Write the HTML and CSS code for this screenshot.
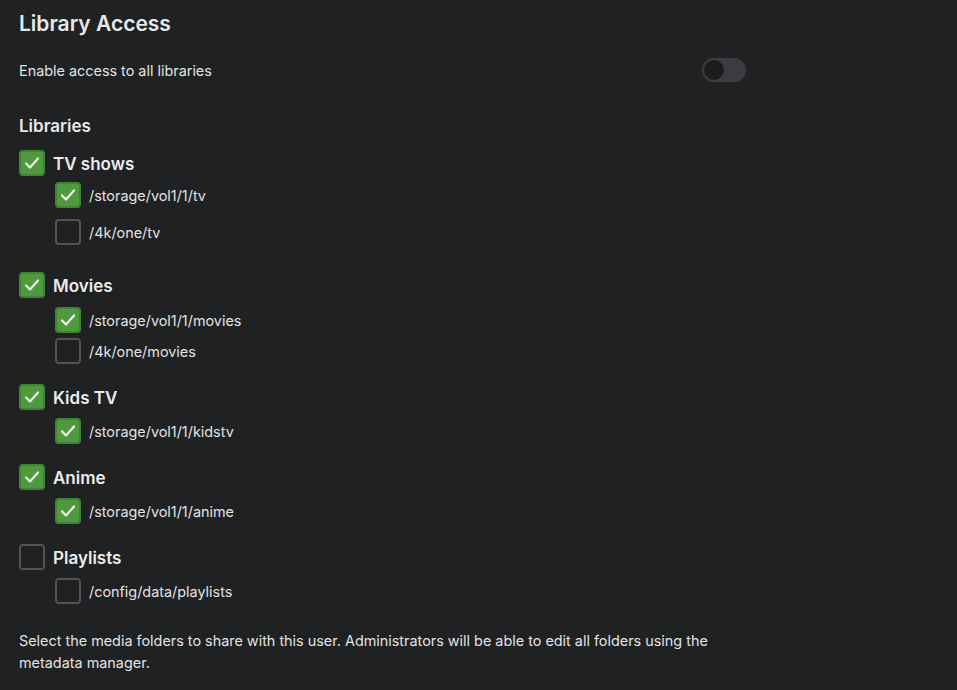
FILE: index.html
```html
<!DOCTYPE html>
<html lang="en">
<head>
<meta charset="utf-8">
<title>Library Access</title>
<link rel="stylesheet" href="styles.css">
</head>
<body>
<div class="page">
  <h1 class="title">Library Access</h1>
  <div class="toggle-row">
    <span class="label">Enable access to all libraries</span>
    <span class="toggle"><span class="knob"></span></span>
  </div>
  <h2 class="section">Libraries</h2>

  <div class="groups">
    <div class="group group-tv">
      <div class="row head"><span class="cb on"><svg viewBox="0 0 26 26"><polyline points="7,13.5 11,17.5 19,8.5"/></svg></span><span>TV shows</span></div>
      <div class="subs">
        <div class="row sub"><span class="cb on"><svg viewBox="0 0 26 26"><polyline points="7,13.5 11,17.5 19,8.5"/></svg></span><span>/storage/vol1/1/tv</span></div>
        <div class="row sub"><span class="cb"></span><span>/4k/one/tv</span></div>
      </div>
    </div>

    <div class="group group-movies">
      <div class="row head"><span class="cb on"><svg viewBox="0 0 26 26"><polyline points="7,13.5 11,17.5 19,8.5"/></svg></span><span>Movies</span></div>
      <div class="subs">
        <div class="row sub"><span class="cb on"><svg viewBox="0 0 26 26"><polyline points="7,13.5 11,17.5 19,8.5"/></svg></span><span>/storage/vol1/1/movies</span></div>
        <div class="row sub"><span class="cb"></span><span>/4k/one/movies</span></div>
      </div>
    </div>

    <div class="group">
      <div class="row head"><span class="cb on"><svg viewBox="0 0 26 26"><polyline points="7,13.5 11,17.5 19,8.5"/></svg></span><span>Kids TV</span></div>
      <div class="subs">
        <div class="row sub"><span class="cb on"><svg viewBox="0 0 26 26"><polyline points="7,13.5 11,17.5 19,8.5"/></svg></span><span>/storage/vol1/1/kidstv</span></div>
      </div>
    </div>

    <div class="group">
      <div class="row head"><span class="cb on"><svg viewBox="0 0 26 26"><polyline points="7,13.5 11,17.5 19,8.5"/></svg></span><span>Anime</span></div>
      <div class="subs">
        <div class="row sub"><span class="cb on"><svg viewBox="0 0 26 26"><polyline points="7,13.5 11,17.5 19,8.5"/></svg></span><span>/storage/vol1/1/anime</span></div>
      </div>
    </div>

    <div class="group">
      <div class="row head"><span class="cb"></span><span>Playlists</span></div>
      <div class="subs">
        <div class="row sub"><span class="cb"></span><span>/config/data/playlists</span></div>
      </div>
    </div>
  </div>

  <p class="note">Select the media folders to share with this user. Administrators will be able to edit all folders using the metadata manager.</p>
</div>
</body>
</html>
```
FILE: styles.css
```css
html, body {
  margin: 0;
  padding: 0;
  background: #1f2123;
}
body {
  font-family: Inter, "Noto Sans", "Liberation Sans", sans-serif;
  color: #e6e6e6;
}
.page {
  width: 727px;
  padding: 10px 19px 0 19px;
}
.title {
  margin: 0;
  font-size: 21px;
  line-height: 28px;
  font-weight: 600;
  color: #e8e8e8;
}
.toggle-row {
  margin-top: 20px;
  height: 24px;
  display: flex;
  align-items: center;
  justify-content: space-between;
}
.label {
  font-size: 14.4px;
  color: #e2e2e2;
}
.toggle {
  width: 44px;
  height: 24px;
  border-radius: 12px;
  background: #3a3c3f;
  display: flex;
  align-items: center;
  padding: 0 2px;
  box-sizing: border-box;
}
.knob {
  width: 20px;
  height: 20px;
  border-radius: 50%;
  background: #1b1c1e;
}
.section {
  margin: 32px 0 0 0;
  font-size: 17px;
  line-height: 24px;
  font-weight: 600;
  color: #e8e8e8;
}
.groups {
  margin-top: 12px;
  display: flex;
  flex-direction: column;
  gap: 20px;
}
.group-tv {
  margin-bottom: 7px;
}
.row {
  display: flex;
  align-items: center;
  gap: 8px;
  height: 26px;
}
.head {
  font-size: 17px;
  font-weight: 600;
  color: #ececec;
  padding-top: 2px;
  box-sizing: border-box;
}
.head .cb {
  margin-top: -2px;
}
.sub {
  font-size: 14.4px;
  color: #e2e2e2;
  margin-left: 36px;
}
.subs {
  margin-top: 8px;
  display: flex;
  flex-direction: column;
  gap: 5px;
}
.group-tv .subs {
  margin-top: 6px;
  gap: 11px;
}
.group-movies .subs {
  margin-top: 9px;
}
.cb {
  width: 26px;
  height: 26px;
  box-sizing: border-box;
  border: 2px solid #56524d;
  border-radius: 4px;
  flex: none;
  display: flex;
  align-items: center;
  justify-content: center;
}
.cb.on {
  background: #50993f;
  border-color: #408433;
}
.cb svg {
  width: 26px;
  height: 26px;
  flex: none;
}
.cb polyline {
  fill: none;
  stroke: #eef3ec;
  stroke-width: 2.2;
  stroke-linecap: round;
  stroke-linejoin: round;
}
.note {
  margin: 26px 0 0 0;
  font-size: 14.4px;
  line-height: 22px;
  color: #e2e2e2;
}
```
